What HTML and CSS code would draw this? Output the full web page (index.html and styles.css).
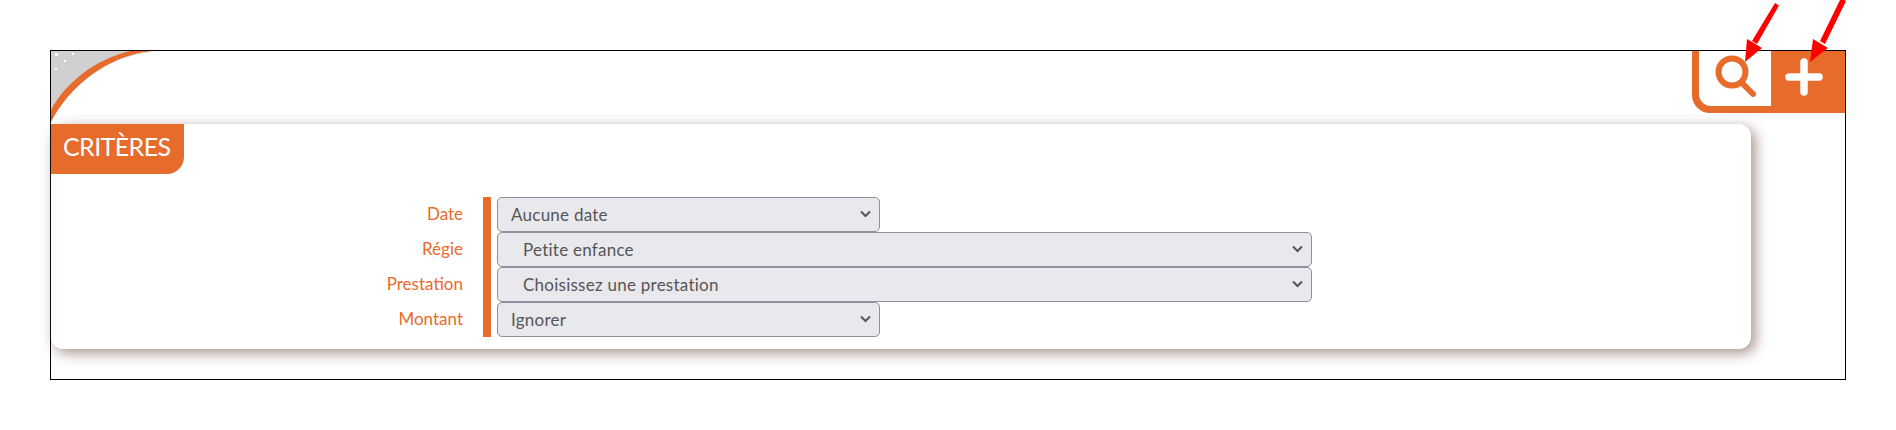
FILE: index.html
```html
<!DOCTYPE html>
<html lang="fr">
<head>
    <meta charset="UTF-8">
    <title>Critères</title>
    <link rel="stylesheet" href="styles.css">
</head>
<body>

    <div class="frame">
        <!-- Coin décoratif -->
        <svg class="corner" width="100" height="73" viewBox="0 0 100 73">
            <path d="M0 0H100V1C55 6 18 36 0 70Z" fill="#d0d0d0"/>
            <path d="M0 59C15 31 45 8 79 0H100C55 5 18 36 0 71Z" fill="#e76b2a"/>
            <rect x="4" y="2" width="3" height="3" fill="#fff"/>
            <rect x="21" y="2" width="2" height="2" fill="#fff"/>
            <rect x="13" y="9" width="2" height="2" fill="#fff"/>
            <rect x="4" y="17" width="2" height="2" fill="#fff"/>
        </svg>

        <div class="header">
            <div class="toolbar">
                <div class="tool-search">
                    <svg width="44" height="46" viewBox="0 0 44 46">
                        <circle cx="18" cy="17" r="13.5" fill="none" stroke="#e76b2a" stroke-width="6"/>
                        <path d="M28 28L39 39" stroke="#e76b2a" stroke-width="6" stroke-linecap="round"/>
                    </svg>
                </div>
                <div class="tool-add">
                    <svg width="38" height="38" viewBox="0 0 38 38">
                        <path d="M4 19H34M19 4V34" stroke="#fff" stroke-width="7.5" stroke-linecap="round"/>
                    </svg>
                </div>
            </div>
        </div>

        <div class="panel">
            <h2 class="tab">CRITÈRES</h2>
            <div class="fields">
                <div class="row">
                    <label class="label">Date</label>
                    <div class="control">
                        <div class="select narrow">
                            <span>Aucune date</span>
                            <svg class="chevron" width="11" height="8" viewBox="0 0 11 8"><path d="M1 1.500L5.500 6L10 1.500" fill="none" stroke="#555" stroke-width="2"/></svg>
                        </div>
                    </div>
                </div>
                <div class="row">
                    <label class="label">Régie</label>
                    <div class="control">
                        <div class="select wide indent">
                            <span>Petite enfance</span>
                            <svg class="chevron" width="11" height="8" viewBox="0 0 11 8"><path d="M1 1.500L5.500 6L10 1.500" fill="none" stroke="#555" stroke-width="2"/></svg>
                        </div>
                    </div>
                </div>
                <div class="row">
                    <label class="label">Prestation</label>
                    <div class="control">
                        <div class="select wide indent">
                            <span>Choisissez une prestation</span>
                            <svg class="chevron" width="11" height="8" viewBox="0 0 11 8"><path d="M1 1.500L5.500 6L10 1.500" fill="none" stroke="#555" stroke-width="2"/></svg>
                        </div>
                    </div>
                </div>
                <div class="row">
                    <label class="label">Montant</label>
                    <div class="control">
                        <div class="select narrow">
                            <span>Ignorer</span>
                            <svg class="chevron" width="11" height="8" viewBox="0 0 11 8"><path d="M1 1.500L5.500 6L10 1.500" fill="none" stroke="#555" stroke-width="2"/></svg>
                        </div>
                    </div>
                </div>
            </div>
        </div>
    </div>

    <!-- Flèches rouges par-dessus la capture -->
    <svg class="arrows" width="1896" height="80" viewBox="0 0 1896 80">
        <g fill="#f00" stroke="none">
            <path d="M1775 3L1779 5.500L1757 44L1752 41Z"/>
            <path d="M1745 62L1747 39L1762 48Z"/>
            <path d="M1841 -2L1846 1L1825 44L1820 41Z"/>
            <path d="M1810 62L1813 39L1828 48Z"/>
        </g>
    </svg>

</body>
</html>
```

FILE: styles.css
```css
* {
    margin: 0;
    padding: 0;
    box-sizing: border-box;
}

body {
    font-family: "Lato", "Liberation Sans", sans-serif;
    background-color: #fff;
    padding: 50px 50px 0;
}

/* Cadre principal */
.frame {
    position: relative;
    height: 330px;
    border: 1px solid #000;
    background-color: #fff;
}

.corner {
    position: absolute;
    top: 0;
    left: 0;
    display: block;
}

.arrows {
    position: absolute;
    top: 0;
    left: 0;
    display: block;
}

/* Barre du haut */
.header {
    height: 73px;
    display: flex;
    justify-content: flex-end;
}

.toolbar {
    display: flex;
    height: 62px;
    width: 153px;
    background-color: #e76b2a;
    border-bottom-left-radius: 18px;
    padding: 0 0 7px 7px;
}

.tool-search {
    width: 72px;
    background-color: #fff;
    border-bottom-left-radius: 12px;
    padding: 4px 0 0 15px;
}

.tool-search svg,
.tool-add svg {
    display: block;
}

.tool-add {
    flex: 1;
    padding: 7px 0 0 14px;
}

/* Panneau des critères */
.panel {
    position: relative;
    width: 1700px;
    height: 225px;
    background-color: #fff;
    border-radius: 12px;
    box-shadow: 4px 4px 14px rgba(105, 70, 60, 0.6);
}

.tab {
    width: 133px;
    height: 50px;
    background-color: #e76b2a;
    color: #fff;
    font-size: 25px;
    font-weight: 400;
    letter-spacing: -0.6px;
    line-height: 45px;
    padding-left: 12px;
    border-bottom-right-radius: 17px;
}

.fields {
    margin-top: 23px;
}

.row {
    display: flex;
    height: 35px;
}

.label {
    width: 432px;
    padding-right: 20px;
    text-align: right;
    color: #e76b2a;
    font-size: 17px;
    line-height: 34px;
}

.control {
    border-left: 8px solid #e76b2a;
    padding-left: 6px;
}

.select {
    display: flex;
    justify-content: space-between;
    align-items: center;
    height: 35px;
    background-color: #e9e9ed;
    border: 1px solid #8f8f9d;
    border-radius: 5px;
    color: #555;
    font-size: 17px;
    letter-spacing: 0.25px;
    padding: 0 8px 1px 13px;
}

.narrow {
    width: 383px;
}

.wide {
    width: 815px;
}

.indent {
    padding-left: 25px;
}
```
